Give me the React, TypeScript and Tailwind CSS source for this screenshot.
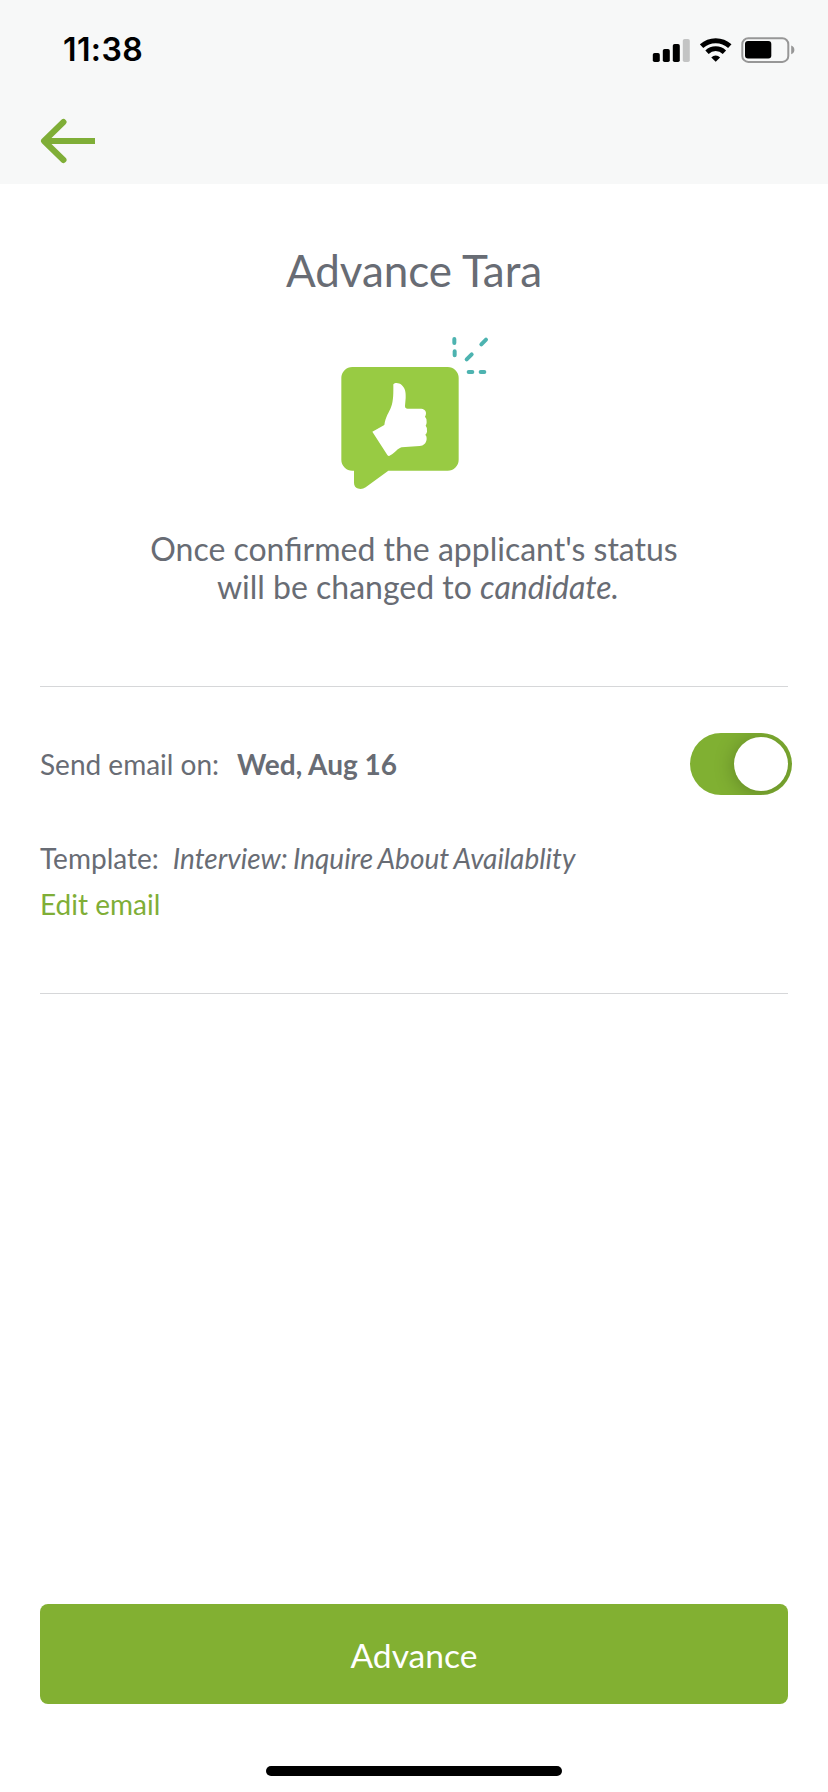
import { useState } from "react";

function SignalIcon() {
  return (
    <svg className="h-6 w-[38px]" viewBox="0 0 38 24" aria-hidden="true">
      <rect x="0.8" y="15" width="7" height="9" rx="1.8" />
      <rect x="10.8" y="11" width="7" height="13" rx="1.8" />
      <rect x="20.8" y="6" width="7" height="18" rx="1.8" />
      <rect x="30.8" y="1" width="7" height="23" rx="1.8" fill="#c3c4c4" />
    </svg>
  );
}

function WifiIcon() {
  return (
    <svg className="ml-[10px] h-6 w-8" viewBox="0 0 32 24" fill="none" stroke="#000" aria-hidden="true">
      <path d="M1.6 8.2A20.8 20.8 0 0 1 29.8 8.2" strokeWidth="5" />
      <path d="M7 14.2A12.6 12.6 0 0 1 24.400 14.2" strokeWidth="4.8" />
      <path d="M15.700 23.8L11.300 19.400A6.2 6.2 0 0 1 20.100 19.400Z" fill="#000" stroke="none" />
    </svg>
  );
}

function BatteryIcon() {
  return (
    <svg className="ml-[9px] h-[26px] w-[54px]" viewBox="0 0 54 26" aria-hidden="true">
      <rect x="1.3" y="1.3" width="46" height="23.6" rx="6" fill="none" stroke="#979797" strokeWidth="2" />
      <rect x="4" y="4" width="26.3" height="17.6" rx="3" />
      <path d="M50.2 8.6C52.4 9.4 53.4 11 53.4 12.9S52.4 16.4 50.2 17.2Z" fill="#979797" />
    </svg>
  );
}

function ThumbsUpArt() {
  return (
    <svg className="h-[180px] w-[190px]" viewBox="0 0 570 540" aria-hidden="true">
      <path
        fill="#98cb43"
        d="M97 141H383A33 33 0 0 1 416 174V419A33 33 0 0 1 383 452H205L137 502Q126 509 114 505.500Q102 501 102 488V452H97A33 33 0 0 1 64 419V174A33 33 0 0 1 97 141Z"
      />
      <path
        fill="#fff"
        d="M157 335L193 315C197 289 207 278 213 262C221 242 220 216 220 193C225 187 237 188 245 195C255 204 258 215 257 234L255 258Q255 266 263 266H300C312 266 318 272 318 280Q318 286 315 290Q321 295 320 307Q320 313 317 317Q323 323 321 335Q320 341 316 344Q321 349 320 357C318 371 311 377 299 378L245 382C234 384 226 398 211 406Q206 410 202 405Z"
      />
      <path
        d="M403 57V69M404 94V106M498 59L484 73M455 103L440 118M446 156H457M482 156H493"
        stroke="#4db3b0"
        strokeWidth="12"
        strokeLinecap="round"
      />
    </svg>
  );
}

export default function App() {
  const [sendEmail, setSendEmail] = useState(true);

  return (
    <div className="flex h-[1792px] w-[828px] flex-col bg-white font-['Lato','Noto_Sans',sans-serif] text-[#686c74]">
      <header className="h-[184px] bg-[#f7f8f8]">
        <div className="flex h-[100px] items-center justify-between pl-[63px] pr-[33px]">
          <span className="font-['Inter',sans-serif] text-[32px] leading-none font-semibold tracking-[0.4px] text-black">
            11:38
          </span>
          <div className="flex items-center">
            <SignalIcon />
            <WifiIcon />
            <BatteryIcon />
          </div>
        </div>
        <button className="mt-[17px] ml-10 block" aria-label="Back">
          <svg className="h-12 w-14" viewBox="0 0 56 48" fill="none" stroke="#7fae37" strokeWidth="6">
            <path d="M3 24H55" />
            <path d="M23.500 5L4 24L23.500 43" strokeLinecap="round" strokeLinejoin="round" />
          </svg>
        </button>
      </header>

      <main className="flex flex-1 flex-col px-10">
        <h1 className="mt-[59px] text-center text-[44px] leading-[54px] tracking-[-0.05px]">Advance Tara</h1>
        <div className="mt-[23px] pl-[280px]">
          <ThumbsUpArt />
        </div>
        <p className="mt-[30px] text-center text-[32px] leading-[38px]">
          Once confirmed the applicant's status
          <br />
          <span className="pl-[8px]">
            will be changed to <em>candidate.</em>
          </span>
        </p>

        <section className="mt-[80px] h-[308px] border-y border-[#d6d7d9]">
          <div className="mt-[46px] flex h-[62px] items-center justify-between text-[28px]">
            <p>
              Send email on:<b className="ml-[18px]">Wed, Aug 16</b>
            </p>
            <button
              role="switch"
              aria-checked={sendEmail}
              aria-label="Send email"
              onClick={() => setSendEmail(!sendEmail)}
              className={`-mr-1 flex h-[62px] w-[102px] overflow-hidden rounded-full p-1 ${
                sendEmail ? "justify-end bg-[#80b032]" : "justify-start bg-gray-300"
              }`}
            >
              <span className="size-[54px] rounded-full bg-white shadow-[0_2px_20px_rgba(0,0,0,0.25)]" />
            </button>
          </div>
          <p className="mt-[40px] text-[28px] leading-[46px]">
            Template:
            <em className="ml-[14px] [word-spacing:-1.4px]">Interview: Inquire About Availablity</em>
          </p>
          <a className="block text-[28px] leading-[46px] text-[#7fae37]">Edit email</a>
        </section>

        <button className="mt-auto h-[100px] rounded-lg bg-[#82b032] pt-[2px] text-[33.6px] text-white">
          Advance
        </button>
        <div className="mt-[62px] mb-4 h-[10px] w-[296px] self-center rounded-full bg-black" />
      </main>
    </div>
  );
}
